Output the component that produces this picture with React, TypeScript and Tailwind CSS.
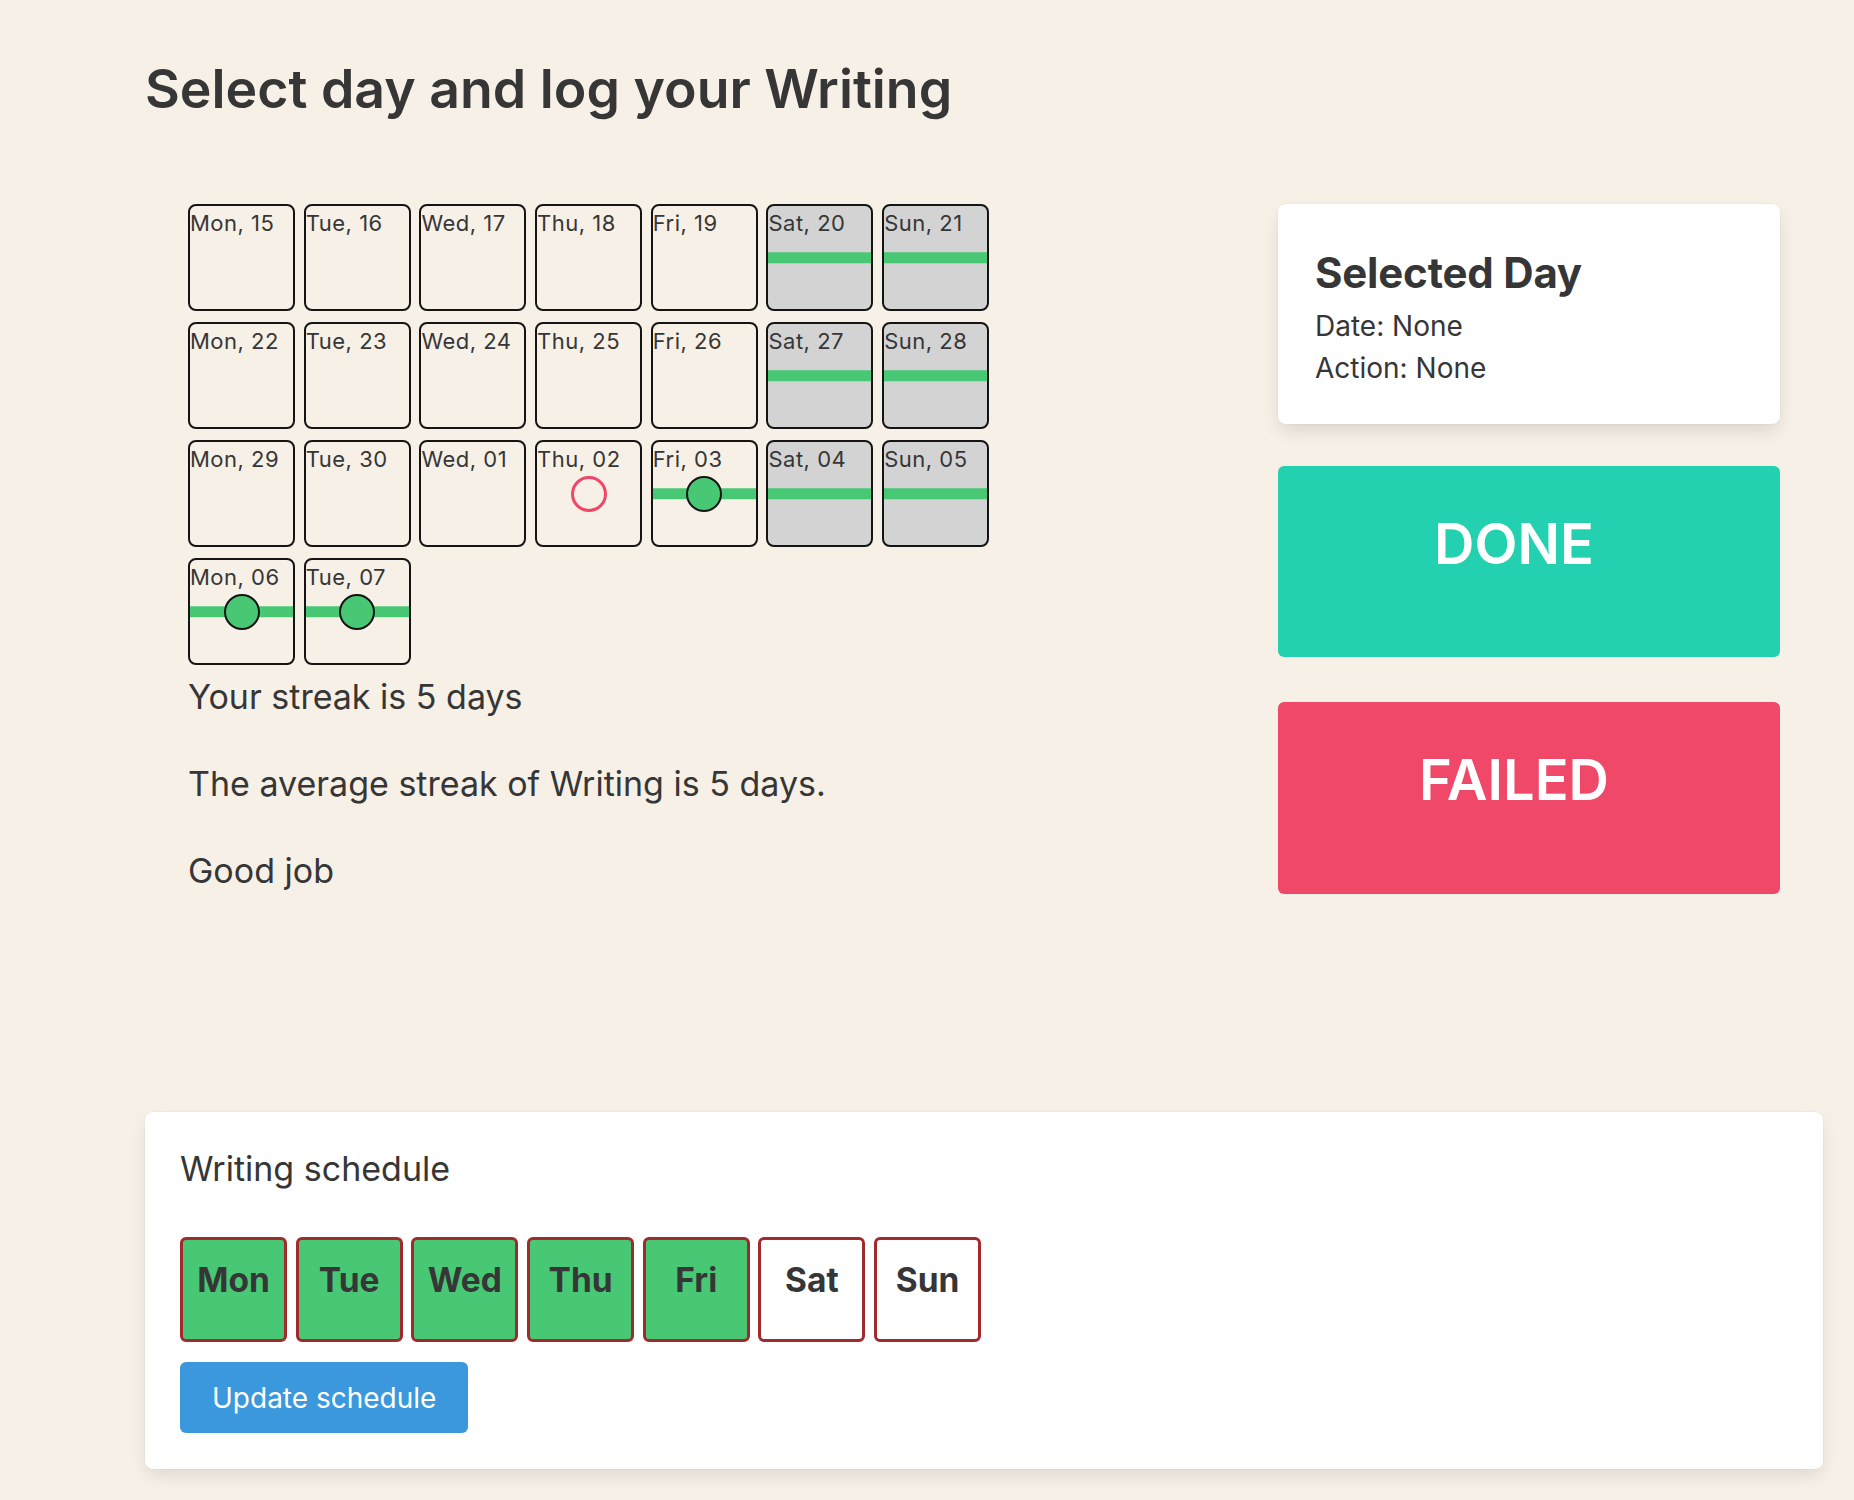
import React from "react";

type Cell = {
  label: string;
  weekend?: boolean;
  bar?: boolean;
  dot?: "done" | "failed";
};

const rows: Cell[][] = [
  [
    { label: "Mon, 15" },
    { label: "Tue, 16" },
    { label: "Wed, 17" },
    { label: "Thu, 18" },
    { label: "Fri, 19" },
    { label: "Sat, 20", weekend: true, bar: true },
    { label: "Sun, 21", weekend: true, bar: true },
  ],
  [
    { label: "Mon, 22" },
    { label: "Tue, 23" },
    { label: "Wed, 24" },
    { label: "Thu, 25" },
    { label: "Fri, 26" },
    { label: "Sat, 27", weekend: true, bar: true },
    { label: "Sun, 28", weekend: true, bar: true },
  ],
  [
    { label: "Mon, 29" },
    { label: "Tue, 30" },
    { label: "Wed, 01" },
    { label: "Thu, 02", dot: "failed" },
    { label: "Fri, 03", bar: true, dot: "done" },
    { label: "Sat, 04", weekend: true, bar: true },
    { label: "Sun, 05", weekend: true, bar: true },
  ],
  [
    { label: "Mon, 06", bar: true, dot: "done" },
    { label: "Tue, 07", bar: true, dot: "done" },
  ],
];

function DayCell({ c }: { c: Cell }) {
  return (
    <div
      className={`relative h-[107px] w-[107px] rounded-[8px] border-2 border-[#141414] ${
        c.weekend ? "bg-[#d3d3d3]" : "bg-transparent"
      }`}
    >
      <div className="pt-[2px] text-[22px] leading-[30px] tracking-[0.5px] text-[#363636]">{c.label}</div>
      {(c.bar || c.dot) && (
        <div className="absolute inset-0 flex items-center justify-center">
          {c.bar && <div className="absolute left-0 right-0 top-1/2 h-[11.5px] -translate-y-1/2 bg-[#48c774]" />}
          {c.dot === "done" && (
            <div className="relative h-[36px] w-[36px] rounded-full border-2 border-[#141414] bg-[#48c774]" />
          )}
          {c.dot === "failed" && (
            <div className="relative h-[36px] w-[36px] rounded-full border-[3px] border-[#f14668] bg-transparent" />
          )}
        </div>
      )}
    </div>
  );
}

const schedule = [
  { d: "Mon", on: true },
  { d: "Tue", on: true },
  { d: "Wed", on: true },
  { d: "Thu", on: true },
  { d: "Fri", on: true },
  { d: "Sat", on: false },
  { d: "Sun", on: false },
];

export default function App() {
  return (
    <div
      className="min-h-screen bg-[#f7f0e6] text-[#363636]"
      style={{ fontFamily: "Inter, 'Noto Sans', sans-serif" }}
    >
      <div className="pl-[145px] pt-[59px]">
        <h1 className="text-[53.6px] font-semibold leading-[1.125] text-[#363636]">
          Select day and log your Writing
        </h1>

        <div className="mt-[85px] flex">
          <div className="ml-[43px] w-[1090px]">
            <div className="grid grid-cols-[repeat(7,107px)] gap-x-[8.7px] gap-y-[11px]">
              {rows.flat().map((c) => (
                <DayCell key={c.label} c={c} />
              ))}
            </div>
            <div className="mt-[7px] text-[34px] leading-[49.5px]">
              <p>Your streak is 5 days</p>
              <p className="mt-[37.5px]">The average streak of Writing is 5 days.</p>
              <p className="mt-[37.5px]">Good job</p>
            </div>
          </div>

          <div className="w-[502px]">
            <div className="h-[220px] rounded-[8px] bg-white pl-[37px] pt-[45px] shadow-[0_8px_18px_-2px_rgba(10,10,10,0.12),0_0_0_1px_rgba(10,10,10,0.02)]">
              <div className="text-[42px] font-bold leading-[47px] tracking-[-0.2px]">Selected Day</div>
              <div className="mt-[9px] text-[28px] leading-[42px]">Date: None</div>
              <div className="text-[28px] leading-[42px]">Action: None</div>
            </div>
            <button className="mt-[42px] flex h-[191px] w-full justify-center rounded-[6px] bg-[#23d1b1] pr-[30px] pt-[50px] text-[56px] font-semibold leading-none text-white">
              DONE
            </button>
            <button className="mt-[45px] flex h-[192px] w-full justify-center rounded-[6px] bg-[#f04868] pr-[30px] pt-[50px] text-[56px] font-semibold leading-none text-white">
              FAILED
            </button>
          </div>
        </div>

        <div className="mt-[216px] w-[1678px] rounded-[8px] bg-white pb-[36px] pl-[35px] pt-[32px] shadow-[0_8px_18px_-2px_rgba(10,10,10,0.1),0_0_0_1px_rgba(10,10,10,0.02)]">
          <div className="text-[34px] leading-[49.5px]">Writing schedule</div>
          <div className="mt-[44px] flex gap-[8.7px]">
            {schedule.map((s) => (
              <div
                key={s.d}
                className={`flex h-[105px] w-[107px] justify-center rounded-[6px] border-[3px] border-[#a02a2e] pt-[24px] text-[33.5px] font-bold leading-none text-[#363636] ${
                  s.on ? "bg-[#48c774]" : "bg-white"
                }`}
              >
                {s.d}
              </div>
            ))}
          </div>
          <button className="mt-[20px] flex h-[71px] items-center rounded-[6px] bg-[#3b98dc] px-[32px] text-[28px] leading-none text-white">
            Update schedule
          </button>
        </div>
      </div>
    </div>
  );
}
